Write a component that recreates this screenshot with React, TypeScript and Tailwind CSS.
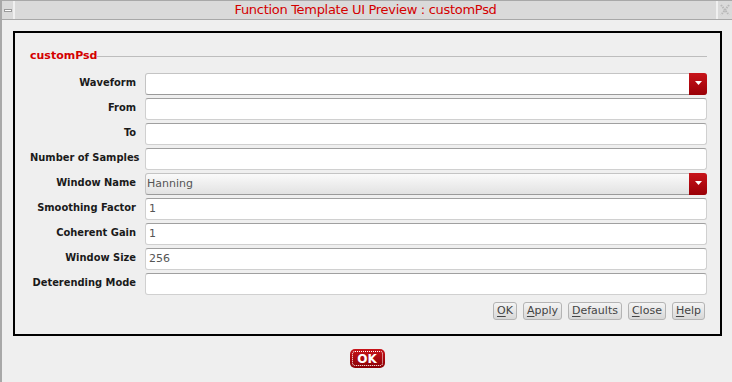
import React from "react";

const rows: { label: string; value?: string; kind: "text" | "combo" }[] = [
  { label: "Waveform", kind: "combo" },
  { label: "From", kind: "text" },
  { label: "To", kind: "text" },
  { label: "Number of Samples", kind: "text" },
  { label: "Window Name", value: "Hanning", kind: "combo" },
  { label: "Smoothing Factor", value: "1", kind: "text" },
  { label: "Coherent Gain", value: "1", kind: "text" },
  { label: "Window Size", value: "256", kind: "text" },
  { label: "Deterending Mode", kind: "text" },
];

function Combo({ value }: { value?: string }) {
  return (
    <div
      className={
        "flex h-[22px] flex-1 items-stretch rounded-[3px] border border-[#c4c4c4] border-b-[#9a9a9a] " +
        (value ? "bg-gradient-to-b from-[#fafafa] to-[#e2e2e2]" : "bg-white")
      }
    >
      <div className="flex-1 pl-[1px] text-[11px] leading-[20px] text-[#555]">{value}</div>
      <div className="-m-px flex w-[18px] items-center justify-center rounded-r-[3px] bg-gradient-to-b from-[#c8141a] to-[#9a0006]">
        <svg width="7" height="5" viewBox="0 0 7 5">
          <path d="M0 0H7L3.5 4Z" fill="#fff" />
        </svg>
      </div>
    </div>
  );
}

function TextField({ value }: { value?: string }) {
  return (
    <div className="h-[22px] flex-1 rounded-[3px] border border-[#d0d0d0] border-t-[#a0a0a0] bg-white pl-[3px] text-[11px] leading-[20px] text-[#555]">
      {value}
    </div>
  );
}

function SmallButton({ u, rest }: { u: string; rest: string }) {
  return (
    <div className="h-[18px] rounded-[3px] border border-[#b4b4b4] bg-gradient-to-b from-[#f4f4f4] to-[#d8d8d8] px-[3px] text-[11px] leading-[16px] text-[#444]">
      <span className="underline underline-offset-2">{u}</span>
      {rest}
    </div>
  );
}

export default function App() {
  return (
    <div
      className="flex h-[382px] w-[732px] flex-col overflow-hidden border-l-2 border-t border-[#a8a8a8] bg-[#efefef]"
      style={{ fontFamily: '"DejaVu Sans", sans-serif' }}
    >
      <div className="flex h-[19px] shrink-0 border-b border-[#a8a8a8] bg-[#dadada]">
        <div className="flex w-[13px] items-center justify-center border-r-2 border-[#f0f0f0]">
          <div className="h-[3px] w-[8px] border border-[#9a9a9a] bg-white" />
        </div>
        <div className="flex-1 text-center text-[13px] leading-[18px] tracking-[-0.3px] text-[#d40000]">
          Function Template UI Preview : customPsd
        </div>
        <div className="flex w-[16px] items-center justify-center border-l-2 border-[#f0f0f0]">
          <svg width="10" height="12" viewBox="0 0 10 12">
            <path d="M1 1L9 11M9 1L1 11" stroke="#b8b8b8" strokeWidth="2" strokeDasharray="1.5 1" fill="none" />
          </svg>
        </div>
      </div>

      <div className="ml-[11px] mt-[11px] flex h-[305px] w-[709px] flex-col border-2 border-black pl-[15px] pr-[13px]">
        <div className="mt-[15px] flex items-center">
          <span className="text-[11px] font-bold text-[#d40000]">customPsd</span>
          <div className="h-px flex-1 bg-[#bdbdbd]" />
        </div>
        <div className="mt-[8px] flex flex-col gap-[3px]">
          {rows.map((r) => (
            <div key={r.label} className="flex items-center">
              <div
                className="w-[115px] shrink-0 whitespace-nowrap pr-[9px] text-right text-[11px] font-bold text-[#1a1a1a]"
                style={{ fontFamily: '"DejaVu Sans Condensed", "DejaVu Sans", sans-serif' }}
              >
                {r.label}
              </div>
              {r.kind === "combo" ? <Combo value={r.value} /> : <TextField value={r.value} />}
            </div>
          ))}
        </div>
        <div className="mt-[7px] flex justify-end gap-[6px] pr-[2px]">
          <SmallButton u="O" rest="K" />
          <SmallButton u="A" rest="pply" />
          <SmallButton u="D" rest="efaults" />
          <SmallButton u="C" rest="lose" />
          <SmallButton u="H" rest="elp" />
        </div>
      </div>

      <div className="mt-[13px] flex justify-center">
        <div className="flex h-[19px] w-[35px] items-center justify-center rounded-[5px] bg-gradient-to-b from-[#c8141a] to-[#8a0004] p-[2px]">
          <div className="flex h-full w-full items-center justify-center rounded-[3px] border border-dotted border-white text-[12px] font-bold leading-none text-white">
            OK
          </div>
        </div>
      </div>
    </div>
  );
}
